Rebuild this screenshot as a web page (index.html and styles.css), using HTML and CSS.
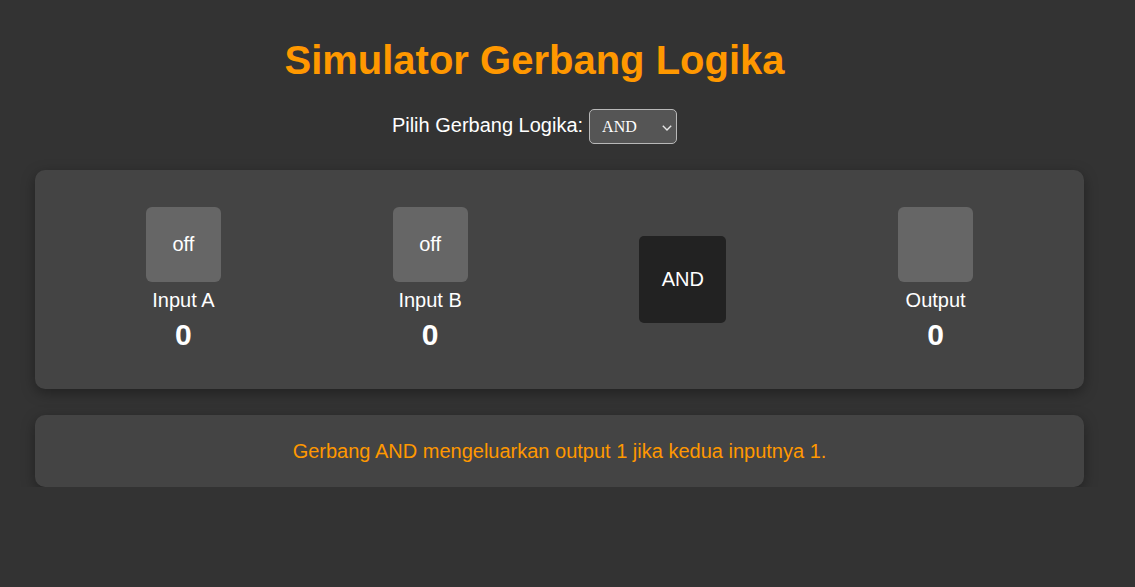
FILE: index.html
```html
<!DOCTYPE html>
<html lang="id">
<head>
<meta charset="utf-8">
<title>Simulator Gerbang Logika</title>
<link rel="stylesheet" href="styles.css">
</head>
<body>
<div class="app">
  <h1 class="title">Simulator Gerbang Logika</h1>
  <div class="chooser">
    <label class="chooser-label" for="gate">Pilih Gerbang Logika:</label>
    <select id="gate" class="gate-select">
      <option>AND</option>
      <option>OR</option>
      <option>NOT</option>
      <option>NAND</option>
      <option>NOR</option>
      <option>XOR</option>
    </select>
  </div>
  <div class="panel circuit">
    <div class="node">
      <div class="switch">off</div>
      <div class="node-label">Input A</div>
      <div class="node-value">0</div>
    </div>
    <div class="node">
      <div class="switch">off</div>
      <div class="node-label">Input B</div>
      <div class="node-value">0</div>
    </div>
    <div class="gate">AND</div>
    <div class="node">
      <div class="switch"></div>
      <div class="node-label">Output</div>
      <div class="node-value">0</div>
    </div>
  </div>
  <div class="panel info">Gerbang AND mengeluarkan output 1 jika kedua inputnya 1.</div>
</div>
</body>
</html>
```
FILE: styles.css
```css
html, body {
  margin: 0;
  padding: 0;
}
body {
  background: #333333;
  color: #ffffff;
  font-family: "Liberation Sans", Arial, sans-serif;
  font-size: 20px;
}
.app {
  width: 1069px;
  box-sizing: border-box;
  padding: 37px 35px 0;
}
.title {
  margin: 0;
  text-align: center;
  font-size: 40px;
  font-weight: bold;
  color: #ff9800;
  line-height: 46px;
}
.chooser {
  margin-top: 26px;
  display: flex;
  justify-content: center;
  align-items: baseline;
  gap: 6px;
}
.chooser-label {
  color: #ffffff;
}
.gate-select {
  -webkit-appearance: none;
  appearance: none;
  font-family: "Liberation Serif", "Times New Roman", serif;
  font-size: 16px;
  height: 35px;
  width: 88px;
  padding: 0 20px 0 12px;
  background-color: #555555;
  background-image: url("data:image/svg+xml,%3Csvg xmlns='http://www.w3.org/2000/svg' width='10' height='6' viewBox='0 0 10 6'%3E%3Cpath d='M0.8 0.8 L5 5 L9.2 0.8' fill='none' stroke='%23e6e6e6' stroke-width='1.4'/%3E%3C/svg%3E");
  background-repeat: no-repeat;
  background-position: 72px 15px;
  background-size: 10px 6px;
  color: #ffffff;
  border: 1px solid #b8b8b8;
  border-radius: 5px;
}
.panel {
  background: #444444;
  border-radius: 10px;
  box-shadow: 0 4px 14px rgba(0, 0, 0, 0.35);
}
.circuit {
  margin-top: 26px;
  width: 999px;
  padding: 37px 25px;
  display: flex;
  justify-content: space-around;
  align-items: center;
}
.node {
  display: flex;
  flex-direction: column;
  align-items: center;
}
.switch {
  width: 75px;
  height: 75px;
  background: #666666;
  border-radius: 6px;
  display: flex;
  align-items: center;
  justify-content: center;
  color: #ffffff;
}
.node-label {
  margin-top: 7px;
  line-height: 23px;
}
.node-value {
  margin-top: 5px;
  font-size: 30px;
  font-weight: bold;
  line-height: 35px;
}
.gate {
  width: 87px;
  height: 87px;
  background: #222222;
  border-radius: 5px;
  display: flex;
  align-items: center;
  justify-content: center;
  color: #ffffff;
}
.info {
  margin-top: 26px;
  width: 999px;
  padding: 25px;
  line-height: 22px;
  text-align: center;
  color: #ff9800;
}
```
